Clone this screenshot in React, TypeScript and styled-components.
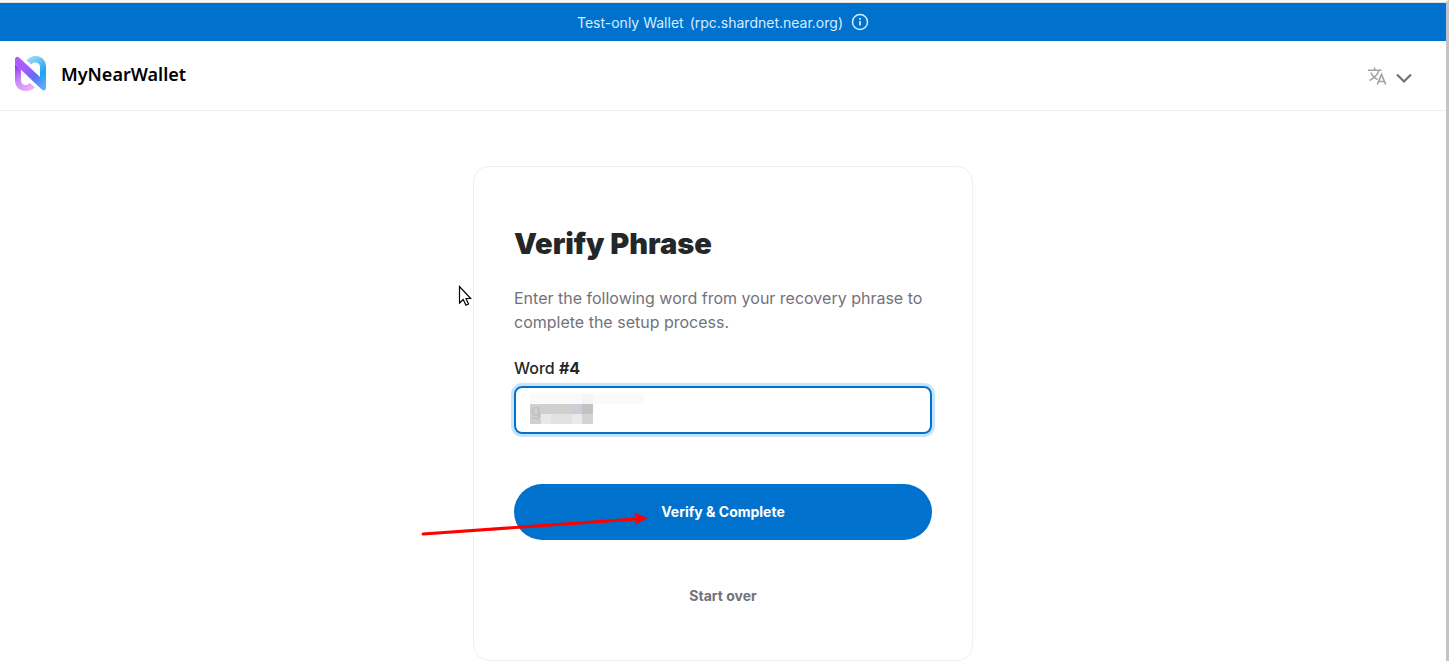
import React, { useState } from 'react';
import styled, { createGlobalStyle } from 'styled-components';

const GlobalStyle = createGlobalStyle`
  *, *::before, *::after { box-sizing: border-box; }
  body {
    margin: 0;
    background: #fff;
    color: #24272a;
    font-family: Inter, "Liberation Sans", sans-serif;
    font-size: 16px;
  }
  button, input, select { font-family: inherit; }
`;

const Page = styled.div`
  position: relative;
  min-height: 100vh;
  border-top: 2px solid #f9f9f9;
  border-right: 3px solid #c3c4c7;
`;

const Banner = styled.div`
  display: flex;
  align-items: center;
  justify-content: center;
  gap: 8px;
  height: 39px;
  border-top: 1px solid #dfdfdf;
  background: #0072ce;
  color: #d6edff;
  font-size: 14px;
`;

const BannerText = styled.span`
  display: flex;
  gap: 6px;
`;

const InfoButton = styled.button`
  display: flex;
  padding: 0;
  border: 0;
  background: none;
  color: inherit;
`;

const Header = styled.header`
  display: flex;
  align-items: center;
  justify-content: space-between;
  height: 70px;
  padding: 0 33px 4px 15px;
  border-bottom: 1px solid #efefef;
`;

const Brand = styled.a`
  display: flex;
  align-items: center;
  gap: 15px;
  color: #000;
  font: 600 18px/24px "Noto Sans", sans-serif;
  text-decoration: none;
`;

const LanguageButton = styled.button`
  display: flex;
  align-items: center;
  gap: 8px;
  padding: 6px 0 0;
  border: 0;
  background: none;
`;

const Main = styled.main`
  display: flex;
  justify-content: center;
  padding-top: 55px;
`;

const Card = styled.form`
  display: flex;
  flex-direction: column;
  width: 100%;
  max-width: 500px;
  padding: 57px 40px 36px;
  border: 1px solid #f0f0f1;
  border-radius: 16px;
`;

const Title = styled.h1`
  margin: 0;
  font-size: 29px;
  font-weight: 900;
  line-height: 40px;
`;

const Intro = styled.p`
  margin: 22px 0;
  color: #72727a;
  line-height: 24px;
`;

const Label = styled.label`
  margin-bottom: 6px;
  font-weight: 500;
  line-height: 24px;
  b { font-weight: 700; }
`;

const Field = styled.div`
  position: relative;
  height: 48px;
  margin-bottom: 50px;
`;

const Mosaic = styled.svg`
  position: absolute;
  top: 8px;
  left: 16px;
`;

const WordInput = styled.input`
  position: relative;
  display: block;
  width: 100%;
  height: 48px;
  padding: 0 15px;
  border: 2px solid #0072ce;
  border-radius: 8px;
  outline: 0;
  box-shadow: 0 0 0 3px #c8e3fc;
  background: transparent;
  color: #bebebe;
  font-size: 16px;
`;

const PillButton = styled.button<{ $plain?: boolean }>`
  height: 56px;
  padding: 0 24px;
  border: 0;
  border-radius: 28px;
  background: ${p => (p.$plain ? 'transparent' : '#0072ce')};
  color: ${p => (p.$plain ? '#72727a' : '#fff')};
  font-size: 14px;
  font-weight: 700;
  line-height: 20px;
  & + & { margin-top: 28px; }
`;

const Pointer = styled.svg`
  position: absolute;
  top: 283px;
  left: calc(50% - 265px);
`;

const Arrow = styled.svg`
  position: absolute;
  top: 508px;
  left: calc(50% - 303px);
  pointer-events: none;
`;

const Logo = () => (
  <svg width="31" height="36" viewBox="0 0 31 36" fill="none" aria-hidden="true">
    <defs>
      <linearGradient id="arch" x1="12" y1="2" x2="31" y2="28" gradientUnits="userSpaceOnUse">
        <stop stopColor="#a5dcf6" />
        <stop offset=".65" stopColor="#1ca5ee" />
        <stop offset="1" stopColor="#35b5f7" />
      </linearGradient>
      <linearGradient id="bowl" x1="1" y1="8" x2="17" y2="34" gradientUnits="userSpaceOnUse">
        <stop stopColor="#8b35f0" />
        <stop offset=".5" stopColor="#c987f7" />
        <stop offset="1" stopColor="#f1b1fb" />
      </linearGradient>
      <linearGradient id="band" x1="2" y1="3" x2="30" y2="33" gradientUnits="userSpaceOnUse">
        <stop stopColor="#b25cff" />
        <stop offset=".3" stopColor="#a45cff" />
        <stop offset=".6" stopColor="#5f6ff2" />
        <stop offset="1" stopColor="#4dbcff" />
      </linearGradient>
    </defs>
    <path d="M11.500 4.500C14 1.500 17 0 20 0C27 0 31 4.500 31 11V27L25 21.500V11C25 8 23 6.500 20 6.500C18.500 6.500 17.500 7 16.500 8.500Z" fill="url(#arch)" />
    <path d="M0 8L6 13.500V24C6 27 8 29 11 29C12.500 29 13.500 28 14.500 27L20 31.500C17.500 34 14.500 35 11 35C4 35 0 30.500 0 24Z" fill="url(#bowl)" />
    <path d="M0 8V3C0 1 2.500 .2 4 1.500L31 26.500V32C31 34.500 28.500 35.200 27 33.800Z" fill="url(#band)" />
  </svg>
);

export default function App() {
  const [word, setWord] = useState('g');
  return (
    <>
      <GlobalStyle />
      <Page>
        <Banner>
          <BannerText>
            <span>Test-only Wallet</span>
            <span>(rpc.shardnet.near.org)</span>
          </BannerText>
          <InfoButton type="button" aria-label="Network information">
            <svg width="18" height="18" viewBox="0 0 18 18" fill="none" stroke="currentColor" strokeWidth="1.500">
              <circle cx="9" cy="9" r="7.500" />
              <path d="M9 8V12.500M9 5V6.700" strokeWidth="1.700" />
            </svg>
          </InfoButton>
        </Banner>
        <Header>
          <Brand href="#"><Logo />MyNearWallet</Brand>
          <LanguageButton type="button" aria-label="Change language">
            <svg width="20" height="20" viewBox="0 0 20 20" fill="none" stroke="#a2a2a8" strokeWidth="1.500">
              <path d="M1 3.200H14.500M7.700 .5V3.200M4 5.500C5.200 9 8 11.300 10.500 12.500M12 3.200C10.500 8 7 11 2.500 13.500" />
              <path d="M10.300 17.500L14.500 7.500L18.700 17.500M11.700 14.500H17.300" strokeWidth="1.700" />
            </svg>
            <svg width="18" height="18" viewBox="0 0 18 18" fill="none" stroke="#72727a" strokeWidth="2.200">
              <path d="M2 6.500L9 13.500L16 6.500" />
            </svg>
          </LanguageButton>
        </Header>
        <Main>
          <Card onSubmit={e => e.preventDefault()}>
            <Title>Verify Phrase</Title>
            <Intro>Enter the following word from your recovery phrase to complete the setup process.</Intro>
            <Label htmlFor="word">Word <b>#4</b></Label>
            <Field>
              <Mosaic width="114" height="30" viewBox="0 0 114 30" shapeRendering="crispEdges" aria-hidden="true">
                <rect width="114" height="10" fill="#fafafa" />
                <rect x="52" width="11" height="10" fill="#f5f5f5" />
                <rect y="10" width="11" height="20" fill="#d1d0d0" />
                <rect x="11" y="10" width="10" height="10" fill="#cfcfd3" />
                <rect x="21" y="10" width="21" height="10" fill="#d0d0d0" />
                <rect x="42" y="10" width="10" height="10" fill="#cdcdd5" />
                <rect x="52" y="10" width="11" height="10" fill="#c3c3c3" />
                <rect x="11" y="20" width="10" height="10" fill="#e7e9eb" />
                <rect x="21" y="20" width="21" height="10" fill="#e0e1e1" />
                <rect x="42" y="20" width="10" height="10" fill="#e9eaee" />
                <rect x="52" y="20" width="11" height="10" fill="#d3d3d3" />
              </Mosaic>
              <WordInput id="word" value={word} onChange={e => setWord(e.target.value)} />
            </Field>
            <PillButton type="submit">Verify &amp; Complete</PillButton>
            <PillButton type="button" $plain>Start over</PillButton>
          </Card>
        </Main>
        <Pointer width="14" height="24" viewBox="0 0 14 24" aria-hidden="true">
          <path d="M1.500 1.500V18L5.200 14.500L8 20.300L10.500 19L8 13.500H12.700Z" fill="#fff" stroke="#000" strokeWidth="1.200" />
        </Pointer>
        <Arrow width="232" height="28" viewBox="0 0 232 28" aria-hidden="true">
          <path d="M3 24L216 9" stroke="#f00" strokeWidth="3" strokeLinecap="round" />
          <path d="M228 8L213.500 2.500L217 9L214.500 15Z" fill="#f00" />
        </Arrow>
      </Page>
    </>
  );
}
